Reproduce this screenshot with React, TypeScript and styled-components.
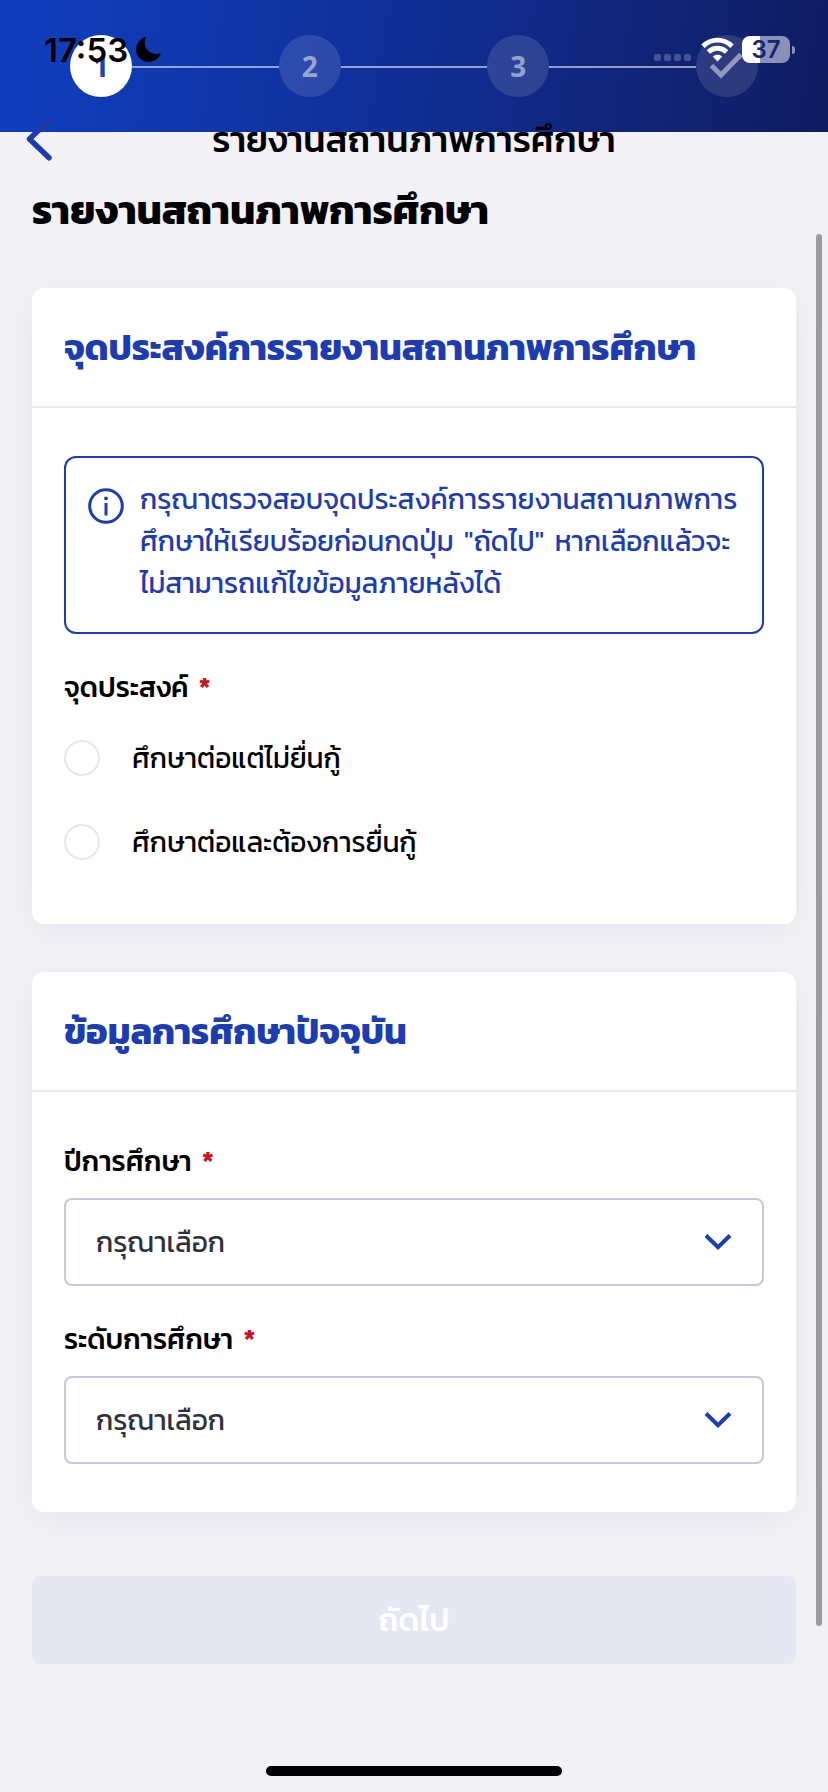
import React, { useState } from "react";
import styled, { createGlobalStyle } from "styled-components";

const GlobalStyle = createGlobalStyle`
  *, *::before, *::after { box-sizing: border-box; }
  html { background: #f2f1f6; }
  body {
    margin: 0;
    background: #f2f1f6;
    color: #000;
    font-family: Kanit, "Noto Sans Thai", "Noto Sans", sans-serif;
    font-size: 28px;
    line-height: 42px;
  }
  h1, h2, p { margin: 0; }
  button, select, input { font: inherit; }
`;

const BLUE = "#1c3cb4";

const Screen = styled.div`
  position: relative;
  display: flex;
  flex-direction: column;
  min-height: 100vh;
`;

const StatusBar = styled.div`
  position: absolute;
  z-index: 2;
  top: 0;
  left: 0;
  right: 0;
  height: 99px;
  padding: 0 33px 0 44px;
  display: flex;
  align-items: center;
  justify-content: space-between;
`;

const StatusGroup = styled.div`
  display: flex;
  align-items: center;
  gap: 8px;
`;

const Clock = styled.time`
  font-family: Inter, sans-serif;
  font-size: 33px;
  font-weight: 600;
`;

const Signal = styled.div`
  display: flex;
  gap: 3px;
  padding: 16px 2px 0 0;
  span {
    width: 7px;
    height: 7px;
    border-radius: 2px;
    background: rgba(255, 255, 255, 0.22);
  }
`;

const BatteryWrap = styled.div`
  display: flex;
  align-items: center;
  gap: 2px;
  &::after {
    content: "";
    width: 3px;
    height: 8px;
    border-radius: 0 4px 4px 0;
    background: #8a91b9;
  }
`;

const Battery = styled.div<{ $level: number }>`
  width: 48px;
  height: 27px;
  border-radius: 8px;
  background: linear-gradient(90deg, #fff ${(p) => p.$level}%, #8a91b9 ${(p) => p.$level}%);
  color: #15256f;
  font: 600 24px/27px Inter, sans-serif;
  text-align: center;
`;

const Header = styled.header`
  height: 132px;
  padding: 0 70px;
  display: flex;
  align-items: center;
  background: linear-gradient(100deg, #0f3fc0 0%, #10309a 45%, #101c60 100%);
`;

const Steps = styled.ol`
  flex: 1;
  margin: 0;
  padding: 0;
  display: flex;
  align-items: center;
  list-style: none;
`;

const Step = styled.li<{ $active?: boolean }>`
  flex: none;
  width: 62px;
  height: 62px;
  border-radius: 50%;
  display: flex;
  align-items: center;
  justify-content: center;
  font-family: "Noto Sans", sans-serif;
  font-size: 28px;
  font-weight: 700;
  background: ${(p) => (p.$active ? "#fff" : "rgba(255,255,255,0.12)")};
  color: ${(p) => (p.$active ? "#1442c0" : "rgba(255,255,255,0.5)")};
`;

const StepLine = styled.li`
  flex: 1;
  height: 2px;
  margin-top: 2px;
  background: rgba(255, 255, 255, 0.55);
`;

const NavBar = styled.nav`
  position: relative;
  z-index: 1;
  height: 88px;
  margin-top: -37px;
  padding: 0 19px;
  display: grid;
  grid-template-columns: 40px 1fr 40px;
  align-items: center;
`;

const BackButton = styled.button`
  height: 60px;
  padding: 0;
  border: 0;
  background: none;
  display: flex;
  align-items: center;
  justify-content: center;
`;

const NavTitle = styled.p`
  font-size: 36px;
  font-weight: 500;
  text-align: center;
`;

const Content = styled.main`
  flex: 1;
  padding: 0 32px 128px;
  display: flex;
  flex-direction: column;
`;

const PageTitle = styled.h1`
  padding-bottom: 50px;
  font-size: 40px;
  line-height: 55px;
  font-weight: 700;
`;

const Card = styled.section`
  margin-bottom: 48px;
  border-radius: 12px;
  background: #fff;
  box-shadow: 0 8px 40px rgba(20, 20, 50, 0.05);
`;

const CardTitle = styled.h2`
  padding: 32px;
  border-bottom: 2px solid #e5e9f3;
  color: ${BLUE};
  font-size: 36px;
  line-height: 54px;
  font-weight: 700;
`;

const CardBody = styled.div`
  padding: 48px 32px;
`;

const Notice = styled.div`
  display: flex;
  gap: 16px;
  align-items: flex-start;
  padding: 20px 22px 28px;
  border: 2px solid ${BLUE};
  border-radius: 12px;
  color: ${BLUE};
  svg { flex: none; margin-top: 10px; }
`;

const Quoted = styled.span`
  margin: 0 4px;
`;

const Group = styled.fieldset`
  margin: 0;
  padding: 32px 0 8px;
  border: 0;
`;

const Legend = styled.legend`
  float: left;
  width: 100%;
  padding: 0;
  margin-bottom: 24px;
  font-weight: 500;
`;

const Asterisk = styled.span`
  margin-left: 10px;
  color: #d0101c;
  font-weight: 600;
`;

const RadioRow = styled.label`
  clear: both;
  display: flex;
  align-items: center;
  gap: 32px;
  height: 52px;
  & + & { margin-top: 32px; }
`;

const Radio = styled.input`
  appearance: none;
  width: 36px;
  height: 36px;
  margin: 0;
  border: 2px solid #e5e8f2;
  border-radius: 50%;
  background: #fff;
  &:checked { border: 10px solid ${BLUE}; }
`;

const Field = styled.div`
  display: flex;
  flex-direction: column;
  gap: 16px;
  & + & { margin-top: 32px; }
`;

const FieldLabel = styled.label`
  font-weight: 500;
`;

const SelectWrap = styled.div`
  display: grid;
  align-items: center;
  > * { grid-area: 1 / 1; }
  svg { justify-self: end; margin-right: 32px; pointer-events: none; }
`;

const Select = styled.select`
  appearance: none;
  width: 100%;
  height: 88px;
  padding: 0 80px 0 30px;
  border: 2px solid #c5c8de;
  border-radius: 8px;
  background: #fff;
  color: #2f313c;
`;

const NextButton = styled.button`
  height: 88px;
  margin-top: 16px;
  border: 0;
  border-radius: 8px;
  background: #e5e8f2;
  color: #fff;
  font-size: 32px;
  font-weight: 500;
`;

const ScrollThumb = styled.div`
  position: absolute;
  top: 234px;
  bottom: 166px;
  right: 6px;
  width: 6px;
  border-radius: 3px;
  background: #9c9c9f;
`;

const HomeIndicator = styled.div`
  position: absolute;
  bottom: 16px;
  left: 50%;
  width: 296px;
  height: 10px;
  margin-left: -148px;
  border-radius: 5px;
  background: #000;
`;

const Moon = () => (
  <svg width="25" height="25" viewBox="0 0 25 25" aria-hidden="true">
    <path d="M9.5 0.3C9.2 0 8.8 0 8.3 0.3C3.3 2.6 0.2 7.3 0.2 12.4C0.2 19.4 5.6 24.8 12.8 24.8C18.2 24.8 22.8 21.7 24.6 17C24.8 16.4 24.4 16.1 23.8 16.3C22.7 16.7 21.5 16.9 20.2 16.9C13.6 16.9 8.8 12.3 8.8 5.8C8.8 4.1 9.1 2.6 9.6 1.3C9.7 0.9 9.7 0.5 9.5 0.3Z" />
  </svg>
);

const Wifi = () => (
  <svg width="33" height="25" viewBox="0 0 33 25" fill="none" stroke="#fff" strokeWidth="4.8" aria-hidden="true">
    <path d="M2 9.2C10 1 23 1 31 9.2" />
    <path d="M7.4 15C12.6 10 20.4 10 25.6 15" />
    <path d="M16.5 24.5L11.8 19.6C14.4 17.2 18.6 17.2 21.2 19.6Z" fill="#fff" stroke="none" />
  </svg>
);

const Check = () => (
  <svg width="36" height="30" viewBox="0 0 36 30" fill="none" stroke="#9298c2" strokeWidth="5" role="img" aria-label="เสร็จสิ้น">
    <path d="M2.5 14.5L12 24L32 3.5" />
  </svg>
);

const BackIcon = () => (
  <svg width="26" height="44" viewBox="0 0 26 44" fill="none" stroke="url(#back)" strokeWidth="5.5" strokeLinecap="round" strokeLinejoin="round" aria-hidden="true">
    <defs>
      <linearGradient id="back" gradientUnits="userSpaceOnUse" x1="0" y1="0" x2="0" y2="44">
        <stop offset="0.34" stopColor="#2339ab" />
        <stop offset="0.34" stopColor={BLUE} />
      </linearGradient>
    </defs>
    <path d="M23 3.2L3.5 22L23 40.8" />
  </svg>
);

const InfoIcon = () => (
  <svg width="36" height="36" viewBox="0 0 36 36" fill="none" stroke={BLUE} strokeWidth="3" aria-hidden="true">
    <circle cx="18" cy="18" r="16.3" />
    <path d="M18 15V27.5" />
    <circle cx="18" cy="10.3" r="1.9" fill={BLUE} stroke="none" />
  </svg>
);

const Chevron = () => (
  <svg width="28" height="18" viewBox="0 0 28 18" fill="none" stroke={BLUE} strokeWidth="4" aria-hidden="true">
    <path d="M2 2.5L14 14.2L26 2.5" />
  </svg>
);

const OPTIONS = ["ศึกษาต่อแต่ไม่ยื่นกู้", "ศึกษาต่อและต้องการยื่นกู้"];

const FIELDS = [
  { id: "year", label: "ปีการศึกษา" },
  { id: "level", label: "ระดับการศึกษา" },
];

export default function App() {
  const [purpose, setPurpose] = useState("");
  return (
    <Screen>
      <GlobalStyle />
      <StatusBar>
        <StatusGroup>
          <Clock>17:53</Clock>
          <Moon />
        </StatusGroup>
        <StatusGroup>
          <Signal><span /><span /><span /><span /></Signal>
          <Wifi />
          <BatteryWrap><Battery $level={37}>37</Battery></BatteryWrap>
        </StatusGroup>
      </StatusBar>
      <Header>
        <Steps>
          <Step $active>1</Step>
          <StepLine aria-hidden="true" />
          <Step>2</Step>
          <StepLine aria-hidden="true" />
          <Step>3</Step>
          <StepLine aria-hidden="true" />
          <Step><Check /></Step>
        </Steps>
      </Header>
      <NavBar>
        <BackButton type="button" aria-label="ย้อนกลับ"><BackIcon /></BackButton>
        <NavTitle>รายงานสถานภาพการศึกษา</NavTitle>
      </NavBar>
      <Content>
        <PageTitle>รายงานสถานภาพการศึกษา</PageTitle>
        <Card>
          <CardTitle>จุดประสงค์การรายงานสถานภาพการศึกษา</CardTitle>
          <CardBody>
            <Notice>
              <InfoIcon />
              <p>กรุณาตรวจสอบจุดประสงค์การรายงานสถานภาพการศึกษาให้เรียบร้อยก่อนกดปุ่ม <Quoted>"ถัดไป"</Quoted> หากเลือกแล้วจะไม่สามารถแก้ไขข้อมูลภายหลังได้</p>
            </Notice>
            <Group>
              <Legend>จุดประสงค์<Asterisk>*</Asterisk></Legend>
              {OPTIONS.map((option) => (
                <RadioRow key={option}>
                  <Radio type="radio" name="purpose" checked={purpose === option} onChange={() => setPurpose(option)} />
                  {option}
                </RadioRow>
              ))}
            </Group>
          </CardBody>
        </Card>
        <Card>
          <CardTitle>ข้อมูลการศึกษาปัจจุบัน</CardTitle>
          <CardBody>
            {FIELDS.map((field) => (
              <Field key={field.id}>
                <FieldLabel htmlFor={field.id}>{field.label}<Asterisk>*</Asterisk></FieldLabel>
                <SelectWrap>
                  <Select id={field.id} defaultValue="">
                    <option value="">กรุณาเลือก</option>
                  </Select>
                  <Chevron />
                </SelectWrap>
              </Field>
            ))}
          </CardBody>
        </Card>
        <NextButton type="button" disabled>ถัดไป</NextButton>
      </Content>
      <ScrollThumb />
      <HomeIndicator />
    </Screen>
  );
}
